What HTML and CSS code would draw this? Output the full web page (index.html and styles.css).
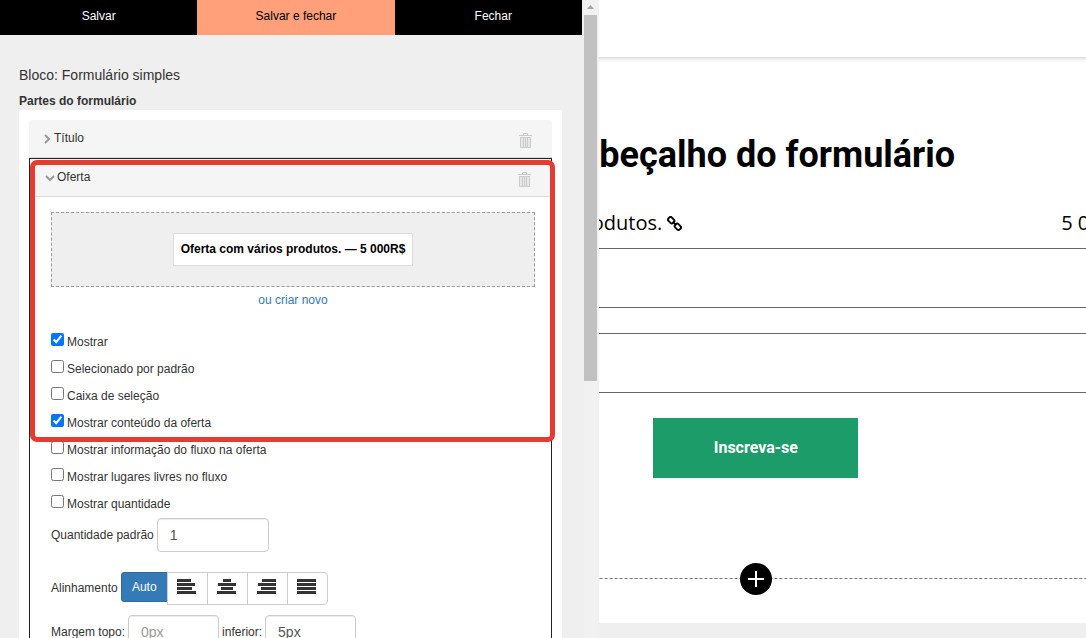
FILE: index.html
```html
<!DOCTYPE html>
<html lang="pt">
<head>
    <meta charset="UTF-8">
    <meta name="viewport" content="width=device-width, initial-scale=1.0">
    <title>Formulário simples</title>
    <link rel="stylesheet" href="styles.css">
</head>
<body>
    <svg class="sprite" aria-hidden="true">
        <symbol id="trash" viewBox="0 0 13 15">
            <path d="M1.500 4.500h10v10h-10z" fill="#e6e6e6"/>
            <path d="M4.500 2V0.500h4V2M0 2.500h13M1.500 4v10.500h10V4M1.500 4.500h10M4.500 5v9M6.500 5v9M8.500 5v9" fill="none" stroke="currentColor"/>
        </symbol>
    </svg>

    <main class="page">
        <header class="page-header"></header>
        <section class="form-block">
            <form class="form">
                <h1>Cabeçalho do formulário</h1>
                <div class="offer-row">
                    <span>Oferta com vários produtos.
                        <svg class="link-icon" viewBox="0 0 16 16" fill="none" stroke="currentColor" stroke-width="2">
                            <rect x="1" y="2" width="7" height="5" rx="2" transform="rotate(45 4.5 4.5)"/>
                            <rect x="8" y="9" width="7" height="5" rx="2" transform="rotate(45 11.5 11.5)"/>
                            <path d="M6 6l4 4"/>
                        </svg>
                    </span>
                    <span>5 000R$</span>
                </div>
                <input class="field" type="text" aria-label="E-mail">
                <input class="field" type="text" aria-label="Nome">
                <button type="button" class="submit">Inscreva-se</button>
            </form>
            <div class="add-line">
                <button type="button" class="add-btn" aria-label="Adicionar bloco">
                    <svg viewBox="0 0 16 16"><path d="M8 0v16M0 8h16" stroke="#fff" stroke-width="2"/></svg>
                </button>
            </div>
        </section>
    </main>

    <aside class="editor">
        <div class="editor-main">
            <div class="toolbar">
                <button type="button">Salvar</button>
                <button type="button" class="active">Salvar e fechar</button>
                <button type="button">Fechar</button>
            </div>
            <div class="settings">
                <h2>Bloco: Formulário simples</h2>
                <h3>Partes do formulário</h3>
                <div class="parts">
                    <div class="part-head closed">
                        <svg class="chevron" viewBox="0 0 10 10"><path d="M3 1l4 4-4 4" fill="none" stroke="currentColor" stroke-width="2"/></svg>
                        <span>Título</span>
                        <button type="button" class="trash" aria-label="Excluir"><svg><use href="#trash"/></svg></button>
                    </div>
                    <div class="part">
                        <div class="highlight">
                            <div class="part-head">
                                <svg class="chevron" viewBox="0 0 10 10"><path d="M1 3l4 4 4-4" fill="none" stroke="currentColor" stroke-width="2"/></svg>
                                <span>Oferta</span>
                                <button type="button" class="trash" aria-label="Excluir"><svg><use href="#trash"/></svg></button>
                            </div>
                            <div class="offer-select">
                                <div class="drop">
                                    <div class="offer">Oferta com vários produtos. — 5 000R$</div>
                                </div>
                                <a href="#">ou criar novo</a>
                            </div>
                            <div class="checks">
                                <label><input type="checkbox" checked> Mostrar</label>
                                <label><input type="checkbox"> Selecionado por padrão</label>
                                <label><input type="checkbox"> Caixa de seleção</label>
                                <label><input type="checkbox" checked> Mostrar conteúdo da oferta</label>
                            </div>
                        </div>
                        <div class="checks">
                            <label><input type="checkbox"> Mostrar informação do fluxo na oferta</label>
                            <label><input type="checkbox"> Mostrar lugares livres no fluxo</label>
                            <label><input type="checkbox"> Mostrar quantidade</label>
                        </div>
                        <div class="line">
                            <label for="qty">Quantidade padrão</label>
                            <input class="control qty" id="qty" type="text" value="1">
                        </div>
                        <div class="line align-line">
                            <span>Alinhamento</span>
                            <div class="btn-group">
                                <button type="button" class="primary">Auto</button>
                                <button type="button" aria-label="Esquerda"><svg viewBox="0 0 20 16"><path d="M0 1.5h14M0 5.5h18M0 9.5h15M0 13.5h19"/></svg></button>
                                <button type="button" aria-label="Centro"><svg viewBox="0 0 20 16"><path d="M6 1.5h8M1 5.5h18M4 9.5h12M0 13.5h19"/></svg></button>
                                <button type="button" aria-label="Direita"><svg viewBox="0 0 20 16"><path d="M5 1.5h14M1 5.5h18M4 9.5h15M0 13.5h19"/></svg></button>
                                <button type="button" aria-label="Justificado"><svg viewBox="0 0 20 16"><path d="M0 1.5h19M0 5.5h19M0 9.5h19M0 13.5h19"/></svg></button>
                            </div>
                        </div>
                        <div class="line">
                            <label for="mt">Margem topo:</label>
                            <input class="control" id="mt" type="text" placeholder="0px">
                            <label for="mb">inferior:</label>
                            <input class="control" id="mb" type="text" value="5px">
                        </div>
                    </div>
                </div>
            </div>
        </div>
        <div class="scrollbar">
            <svg class="arrow" viewBox="0 0 7 4"><path d="M0 4L3.5 0 7 4z" fill="#a3a3a3"/></svg>
            <div class="thumb"></div>
        </div>
    </aside>
</body>
</html>
```
FILE: styles.css
```css
* {
    box-sizing: border-box;
}

body {
    margin: 0;
    height: 100vh;
    overflow: hidden;
    position: relative;
    background: #efefef;
    color: #333;
    font-family: "Liberation Sans", Arial, sans-serif;
    font-size: 12px;
    line-height: 17px;
}

button {
    font-family: inherit;
    cursor: pointer;
}

.sprite {
    position: absolute;
    width: 0;
    height: 0;
}

/* page being edited, the panel lies over its left side */
.page {
    width: 139.2vw;
    color: #000;
}

.page-header {
    height: 58px;
    background: #fff;
    border-bottom: 1px solid #ddd;
    box-shadow: 0 1px 4px rgba(0, 0, 0, 0.15);
    position: relative;
}

.form-block {
    background: #fff;
    padding: 72px 0 44px;
}

.form {
    width: 54%;
    max-width: 760px;
    margin: 0 auto;
    display: flex;
    flex-direction: column;
}

h1 {
    margin: 0;
    font-family: Roboto, sans-serif;
    font-size: 36px;
    line-height: 50px;
    font-weight: 700;
    text-align: center;
}

.offer-row {
    display: flex;
    justify-content: space-between;
    margin: 28px 0 10px;
    padding-left: 24px;
    font-family: "Open Sans", sans-serif;
    font-size: 20px;
    font-weight: 400;
    line-height: 30px;
}

.link-icon {
    width: 15px;
    height: 15px;
    vertical-align: -1px;
}

.field {
    height: 60px;
    margin-bottom: 25px;
    border: 1px solid #666;
    background: #fff;
}

.submit {
    align-self: center;
    min-width: 205px;
    height: 60px;
    padding: 0 20px 2px;
    border: 0;
    background: #1b9c68;
    color: #fff;
    font-family: Roboto, sans-serif;
    font-size: 16px;
    font-weight: 700;
}

.add-line {
    height: 0;
    margin-top: 100px;
    border-top: 1px dashed #777;
    display: flex;
    justify-content: center;
    align-items: center;
}

.add-btn {
    flex: none;
    width: 32px;
    height: 32px;
    padding: 8px;
    border: 0;
    border-radius: 50%;
    background: #000;
}

.add-btn svg {
    display: block;
}

/* editor panel */
.editor {
    position: absolute;
    top: 0;
    bottom: 0;
    left: 0;
    width: 599px;
    display: flex;
    background: #efefef;
    overflow: hidden;
}

.editor-main {
    flex: 1;
    min-width: 0;
    padding-right: 2px;
}

.toolbar {
    display: flex;
    overflow: hidden;
    background: #000;
}

.toolbar button {
    flex: none;
    width: 33.9%;
    height: 35px;
    padding: 0 0 4px;
    border: 0;
    background: #000;
    color: #fff;
    font-size: 12px;
}

.toolbar .active {
    background: #ffa07a;
    color: #000;
}

.settings {
    padding: 31px 20px 0 19px;
}

h2 {
    margin: 0;
    font-size: 14px;
    font-weight: 400;
    line-height: 18px;
}

h3 {
    margin: 9px 0 0;
    font-size: 12px;
    line-height: 17px;
}

.parts {
    padding: 10px;
    background: #fff;
}

.part-head {
    height: 38px;
    display: flex;
    align-items: center;
    padding: 0 20px 0 15px;
    background: #f5f5f5;
    border-bottom: 1px solid #ddd;
}

.closed {
    padding-left: 13px;
    border-radius: 3px 3px 0 0;
}

.chevron {
    width: 10px;
    height: 10px;
    margin-right: 2px;
    color: #999;
}

.trash {
    width: 13px;
    height: 15px;
    margin: 4px 0 0 auto;
    padding: 0;
    border: 0;
    background: none;
    color: #ccc;
}

.trash svg {
    display: block;
    width: 13px;
    height: 15px;
}

.part {
    border: 1px solid #222;
    padding-bottom: 20px;
}

.highlight {
    position: relative;
}

.highlight::after {
    content: "";
    position: absolute;
    inset: 1px -4px -5px 0;
    border: 5px solid #e63b30;
    border-radius: 7px;
    pointer-events: none;
}

.offer-select {
    padding: 15px 16px 20px 21px;
    text-align: center;
}

.drop {
    display: flex;
    justify-content: center;
    padding: 20px;
    margin-bottom: 5px;
    background: #efefef;
    border: 1px dashed #999;
}

.offer {
    padding: 7px;
    background: #fff;
    border: 1px solid #ddd;
    color: #000;
    font-weight: 700;
}

a {
    color: #337ab7;
    text-decoration: none;
}

.checks {
    padding-left: 21px;
}

.checks label {
    display: flex;
    align-items: center;
    height: 27px;
}

.checks input {
    width: 13px;
    height: 13px;
    margin: 0 3px 6px 0;
}

.line {
    display: flex;
    align-items: center;
    gap: 3px;
    padding-left: 21px;
}

.align-line {
    margin: 20px 0 10px;
}

.control {
    width: 91px;
    height: 34px;
    padding: 6px 12px;
    border: 1px solid #ccc;
    border-radius: 4px;
    box-shadow: inset 0 1px 1px rgba(0, 0, 0, 0.075);
    color: #555;
    font-family: inherit;
    font-size: 14px;
}

.control::placeholder {
    color: #999;
}

.qty {
    width: 112px;
}

.btn-group {
    display: flex;
    align-items: flex-start;
}

.btn-group button {
    width: 41px;
    height: 33px;
    margin-left: -1px;
    padding: 0 0 3px;
    border: 1px solid #ccc;
    background: #fff;
    font-size: 12px;
}

.btn-group button:last-child {
    border-radius: 0 4px 4px 0;
}

.btn-group .primary {
    width: 47px;
    height: 30px;
    margin: 0;
    padding: 0;
    border-color: #2e6da4;
    border-radius: 3px 0 0 3px;
    background: #337ab7;
    color: #fff;
}

.btn-group svg {
    display: block;
    width: 20px;
    height: 16px;
    margin: 0 auto;
    stroke: #333;
    stroke-width: 3;
}

.scrollbar {
    width: 15px;
    background: #f1f1f1;
}

.arrow {
    display: block;
    width: 7px;
    height: 4px;
    margin: 5px 3px 6px;
}

.thumb {
    width: 13px;
    height: calc(57% + 2px);
    background: #c1c1c1;
}
```
